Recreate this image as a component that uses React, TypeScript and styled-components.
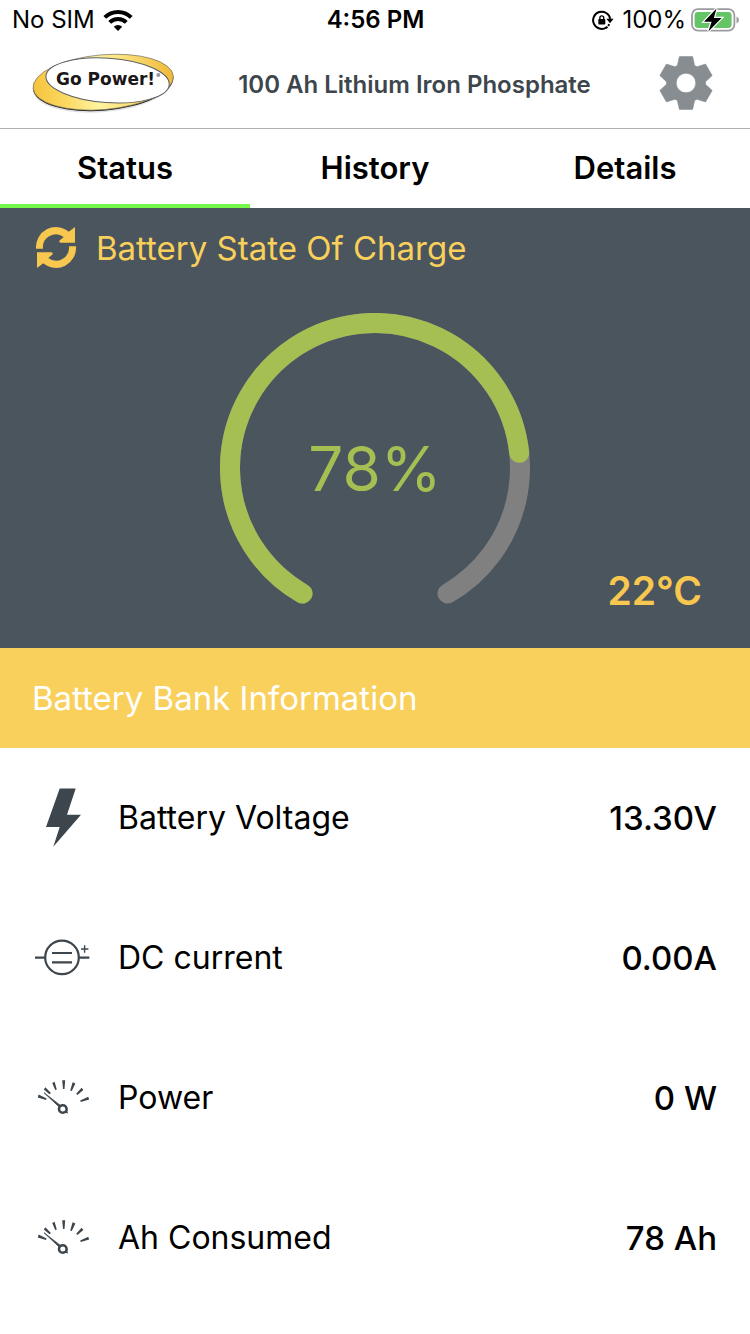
import React from "react";
import styled, { createGlobalStyle } from "styled-components";

const colors = {
  slate: "#4b555d",
  ink: "#3d464d",
  gold: "#f9d05b",
  amber: "#f8c750",
  lime: "#a5bf53",
  track: "#808080",
  active: "#76f84a",
};

const GlobalStyle = createGlobalStyle`
  * { box-sizing: border-box; }
  body {
    margin: 0;
    background: #fff;
    color: #000;
    font-family: Inter, "Liberation Sans", sans-serif;
  }
  button { font: inherit; color: inherit; background: none; border: 0; padding: 0; cursor: pointer; }
  h1, h2, p, dl, dt, dd { margin: 0; font-weight: inherit; }
  svg { display: block; flex: none; }
`;

const Screen = styled.div`
  min-height: 100vh;
  display: flex;
  flex-direction: column;
`;

const StatusBar = styled.div`
  display: grid;
  grid-template-columns: 1fr auto 1fr;
  align-items: center;
  height: 40px;
  padding: 0 11px 0 12px;
  font-size: 24px;
  line-height: 28px;
`;

const StatusGroup = styled.div<{ $end?: boolean }>`
  display: flex;
  align-items: center;
  gap: 8px;
  justify-content: ${(p) => (p.$end ? "flex-end" : "flex-start")};
`;

const BatteryLevel = styled.span`
  display: flex;
  align-items: center;
  gap: 5px;
`;

const Clock = styled.time`
  font-weight: 600;
`;

const Header = styled.header`
  display: flex;
  align-items: center;
  height: 89px;
  padding: 0 32px 2px;
  border-bottom: 1px solid #b0b0b0;
`;

const DeviceName = styled.h1`
  flex: 1;
  padding-top: 4px;
  text-align: center;
  color: ${colors.ink};
  font-size: 24px;
  line-height: 32px;
  font-weight: 600;
`;

const SettingsButton = styled.button`
  display: flex;
  justify-content: center;
  width: 64px;
`;

const Tabs = styled.nav`
  display: grid;
  grid-template-columns: repeat(3, 1fr);
`;

const Tab = styled.button<{ $active?: boolean }>`
  height: 79px;
  padding-top: 2px;
  border-bottom: 4px solid ${(p) => (p.$active ? colors.active : "transparent")};
  font-size: 31px;
  line-height: 40px;
  font-weight: 600;
`;

const ChargePanel = styled.section`
  background: ${colors.slate};
  height: 440px;
`;

const ChargeHeading = styled.div`
  display: flex;
  align-items: center;
  gap: 19px;
  height: 80px;
  padding-left: 35px;
  color: ${colors.gold};
`;

const SectionTitle = styled.h2`
  font-size: 33px;
  line-height: 40px;
`;

const GaugeRow = styled.div`
  display: grid;
  grid-template-columns: 1fr 310px 1fr;
  padding: 25px 48px 0;
`;

const GaugeText = styled.text`
  font-family: Inter, sans-serif;
  font-size: 62px;
  font-weight: 400;
`;

const Temperature = styled.p`
  grid-column: 3;
  align-self: end;
  justify-self: end;
  padding-bottom: 8px;
  color: ${colors.amber};
  font-size: 39px;
  line-height: 48px;
  font-weight: 600;
`;

const Gauge = styled.svg`
  grid-column: 2;
`;

const BankHeading = styled.div`
  display: flex;
  align-items: center;
  height: 100px;
  padding: 0 32px;
  background: ${colors.gold};
  color: #fff;
`;

const Readings = styled.dl`
  display: flex;
  flex-direction: column;
`;

const Reading = styled.div`
  display: flex;
  align-items: center;
  height: 140px;
  padding: 0 33px;
  line-height: 40px;
`;

const ReadingLabel = styled.dt`
  display: flex;
  align-items: center;
  gap: 27px;
  flex: 1;
  font-size: 32px;
`;

const ReadingValue = styled.dd`
  font-size: 33px;
  font-weight: 500;
`;

const WifiIcon = () => (
  <svg width="30" height="22" viewBox="0 0 30 22" fill="none" stroke="#000" strokeWidth="4">
    <path d="M1.8 8.4a18.6 18.6 0 0 1 26.4 0" />
    <path d="M6.7 13.4a11.7 11.7 0 0 1 16.6 0" />
    <path d="M15 22l-4.2-4.3a6 6 0 0 1 8.4 0z" fill="#000" stroke="none" />
  </svg>
);

const RotationLockIcon = () => (
  <svg width="22" height="20" viewBox="0 0 22 20" fill="none" stroke="#000" strokeWidth="2">
    <path d="M14.4 17.5a8.6 8.6 0 1 1 3.8-8.6" />
    <path d="M14.4 8.7h7.2l-3.6 4.6z" fill="#000" stroke="none" />
    <path d="M17.2 14.2a8.6 8.6 0 0 1-3.4 3.8" strokeDasharray="2 1" />
    <rect x="6.3" y="9" width="7" height="5.6" rx=".8" fill="#000" stroke="none" />
    <path d="M7.9 9.3V7.8a1.9 1.9 0 0 1 3.8 0v1.5" strokeWidth="1.4" />
  </svg>
);

const BatteryIcon = () => (
  <svg width="48" height="24" viewBox="0 0 48 24">
    <rect x="1" y="1.2" width="42.4" height="21.4" rx="6" fill="none" stroke="#9c9c9f" strokeWidth="1.8" />
    <path d="M45.5 8.4q2.5 1 2.5 3.6t-2.5 3.6z" fill="#9c9c9f" />
    <rect x="3.6" y="4" width="37" height="16" rx="3.4" fill="#65c466" />
    <path d="M25.5.5L13 13.7h7.6L17.4 23.4 30.6 10h-7.7z" fill="#000" stroke="#fff" strokeWidth="2.4" paintOrder="stroke" />
  </svg>
);

const Logo = () => (
  <svg width="143" height="60" viewBox="0 0 143 60" role="img" aria-label="Go Power!">
    <defs>
      <linearGradient id="goldRing" x1="0" x2="1">
        <stop offset="0" stopColor="#f5c33c" />
        <stop offset=".22" stopColor="#fbd860" />
        <stop offset=".45" stopColor="#fdf3a0" />
        <stop offset=".65" stopColor="#fbe27c" />
        <stop offset="1" stopColor="#f0b93a" />
      </linearGradient>
    </defs>
    <ellipse cx="71" cy="31.8" rx="70" ry="27.4" transform="rotate(-5 71 31.8)" fill="#ccc" opacity=".6" />
    <ellipse cx="71.2" cy="30.2" rx="70.4" ry="27.4" transform="rotate(-5 71.2 30.2)" fill="#151515" />
    <ellipse cx="71.2" cy="29.2" rx="70.4" ry="27.4" transform="rotate(-5 71.2 29.2)" fill="url(#goldRing)" stroke="#77705c" strokeWidth=".7" />
    <ellipse cx="75.6" cy="27.4" rx="61.8" ry="22.2" transform="rotate(4 75.6 27.4)" fill="#fff" stroke="#5e6066" strokeWidth="1" />
    <text x="24" y="32" fontFamily='"DejaVu Sans", sans-serif' fontSize="17" fontWeight="700" fill="#1b1718">
      Go Power!
    </text>
    <circle cx="126.3" cy="22" r="2" fill="#999" />
  </svg>
);

const rotate = (x: number, y: number, degrees: number) => {
  const a = (degrees * Math.PI) / 180;
  return `${x * Math.cos(a) - y * Math.sin(a)} ${x * Math.sin(a) + y * Math.cos(a)}`;
};

const gearTeeth = [0, 60, 120, 180, 240, 300]
  .map((a) => [[-8.6, -17.6], [-6.6, -26.4], [6.6, -26.4], [8.6, -17.6]].map(([x, y]) => rotate(x, y, a)).join("L"))
  .join("L");

const GearIcon = () => (
  <svg width="54" height="54" viewBox="-27 -27 54 54" fill="#878d91">
    <path
      fillRule="evenodd"
      stroke="#878d91"
      strokeLinejoin="round"
      strokeWidth=".6"
      d={`M${gearTeeth}ZM9.8 0A9.8 9.8 0 1 0 -9.8 0A9.8 9.8 0 1 0 9.8 0Z`}
    />
  </svg>
);

const refreshArrow = "M1 21.7A20 20 0 0 1 33.7 4.7L40 0V15.7H25.5Q23.6 15 24.6 13.6L28.7 10A13 13 0 0 0 8 21.7Z";

const RefreshIcon = () => (
  <svg width="42" height="42" viewBox="0 0 42 42" fill={colors.amber}>
    <path d={refreshArrow} />
    <path d={refreshArrow} transform="rotate(180 21 20.5)" />
  </svg>
);

const BoltIcon = () => (
  <svg width="58" height="60" viewBox="0 0 58 60" fill={colors.ink}>
    <path d="M26.7 0.4H42.7L34 26.7H48L20.3 58.7L26.7 39H13Z" />
  </svg>
);

const CurrentIcon = () => (
  <svg width="58" height="60" viewBox="0 0 58 60" fill="none" stroke={colors.ink} strokeWidth="2.2">
    <circle cx="29" cy="29.4" r="16.8" />
    <path d="M2 29.6H12.5M46 29.6H56.4M19 25H39M19 34.4H39" />
    <path d="M48 21H55.4M51.6 17.2V24.8" strokeWidth="1.4" />
  </svg>
);

const MeterIcon = () => (
  <svg width="58" height="60" viewBox="0 0 58 60" fill={colors.ink}>
    <path d="M5.6 26.6L13.6 30.6L13 32L4.8 29.4ZM12.4 19.2L17.9 25L16.5 26.2L10.8 21.6ZM21.6 13.8L23.8 21.4L22.2 22L19.2 15ZM29.2 12.2H32.2L31.5 21H30ZM39.6 14.2L42.4 15.4L38.8 23L37.2 22.4ZM48.6 19.8L50.4 22L44.4 27L43.2 25.8ZM55.2 28.8L56.2 31.4L47.8 34L47.2 32.4Z" />
    <path d="M11 24.7L27.4 37.4L26.2 39Z" stroke={colors.ink} strokeWidth=".8" />
    <circle cx="29.8" cy="41" r="3.8" fill="none" stroke={colors.ink} strokeWidth="2.6" />
    <path d="M31 44.6L34 41.8L35 45.4Z" />
  </svg>
);

const START = 210;
const SWEEP = 300;

const pointAt = (degrees: number) => {
  const a = (degrees * Math.PI) / 180;
  return `${155 + 145 * Math.sin(a)} ${155 - 145 * Math.cos(a)}`;
};

const arc = (fraction: number) =>
  `M${pointAt(START)}A145 145 0 ${fraction * SWEEP > 180 ? 1 : 0} 1 ${pointAt(START + SWEEP * fraction)}`;

const ChargeGauge = ({ percent }: { percent: number }) => (
  <Gauge width="310" height="310" viewBox="0 0 310 310" fill="none" strokeWidth="20" strokeLinecap="round">
    <path d={arc(1)} stroke={colors.track} />
    <path d={arc(percent / 100)} stroke={colors.lime} />
    <GaugeText x="155" y="178" textAnchor="middle" fill={colors.lime} stroke="none">
      {percent}%
    </GaugeText>
  </Gauge>
);

const readings = [
  { label: "Battery Voltage", value: "13.30V", Icon: BoltIcon },
  { label: "DC current", value: "0.00A", Icon: CurrentIcon },
  { label: "Power", value: "0 W", Icon: MeterIcon },
  { label: "Ah Consumed", value: "78 Ah", Icon: MeterIcon },
];

export default function App() {
  return (
    <Screen>
      <GlobalStyle />
      <StatusBar>
        <StatusGroup>
          No SIM
          <WifiIcon />
        </StatusGroup>
        <Clock>4:56 PM</Clock>
        <StatusGroup $end>
          <RotationLockIcon />
          <BatteryLevel>
            100%
            <BatteryIcon />
          </BatteryLevel>
        </StatusGroup>
      </StatusBar>
      <Header>
        <Logo />
        <DeviceName>100 Ah Lithium Iron Phosphate</DeviceName>
        <SettingsButton aria-label="Settings">
          <GearIcon />
        </SettingsButton>
      </Header>
      <Tabs>
        <Tab $active>Status</Tab>
        <Tab>History</Tab>
        <Tab>Details</Tab>
      </Tabs>
      <ChargePanel>
        <ChargeHeading>
          <button aria-label="Refresh">
            <RefreshIcon />
          </button>
          <SectionTitle>Battery State Of Charge</SectionTitle>
        </ChargeHeading>
        <GaugeRow>
          <ChargeGauge percent={78} />
          <Temperature>22°C</Temperature>
        </GaugeRow>
      </ChargePanel>
      <BankHeading>
        <SectionTitle>Battery Bank Information</SectionTitle>
      </BankHeading>
      <Readings>
        {readings.map(({ label, value, Icon }) => (
          <Reading key={label}>
            <ReadingLabel>
              <Icon />
              {label}
            </ReadingLabel>
            <ReadingValue>{value}</ReadingValue>
          </Reading>
        ))}
      </Readings>
    </Screen>
  );
}
